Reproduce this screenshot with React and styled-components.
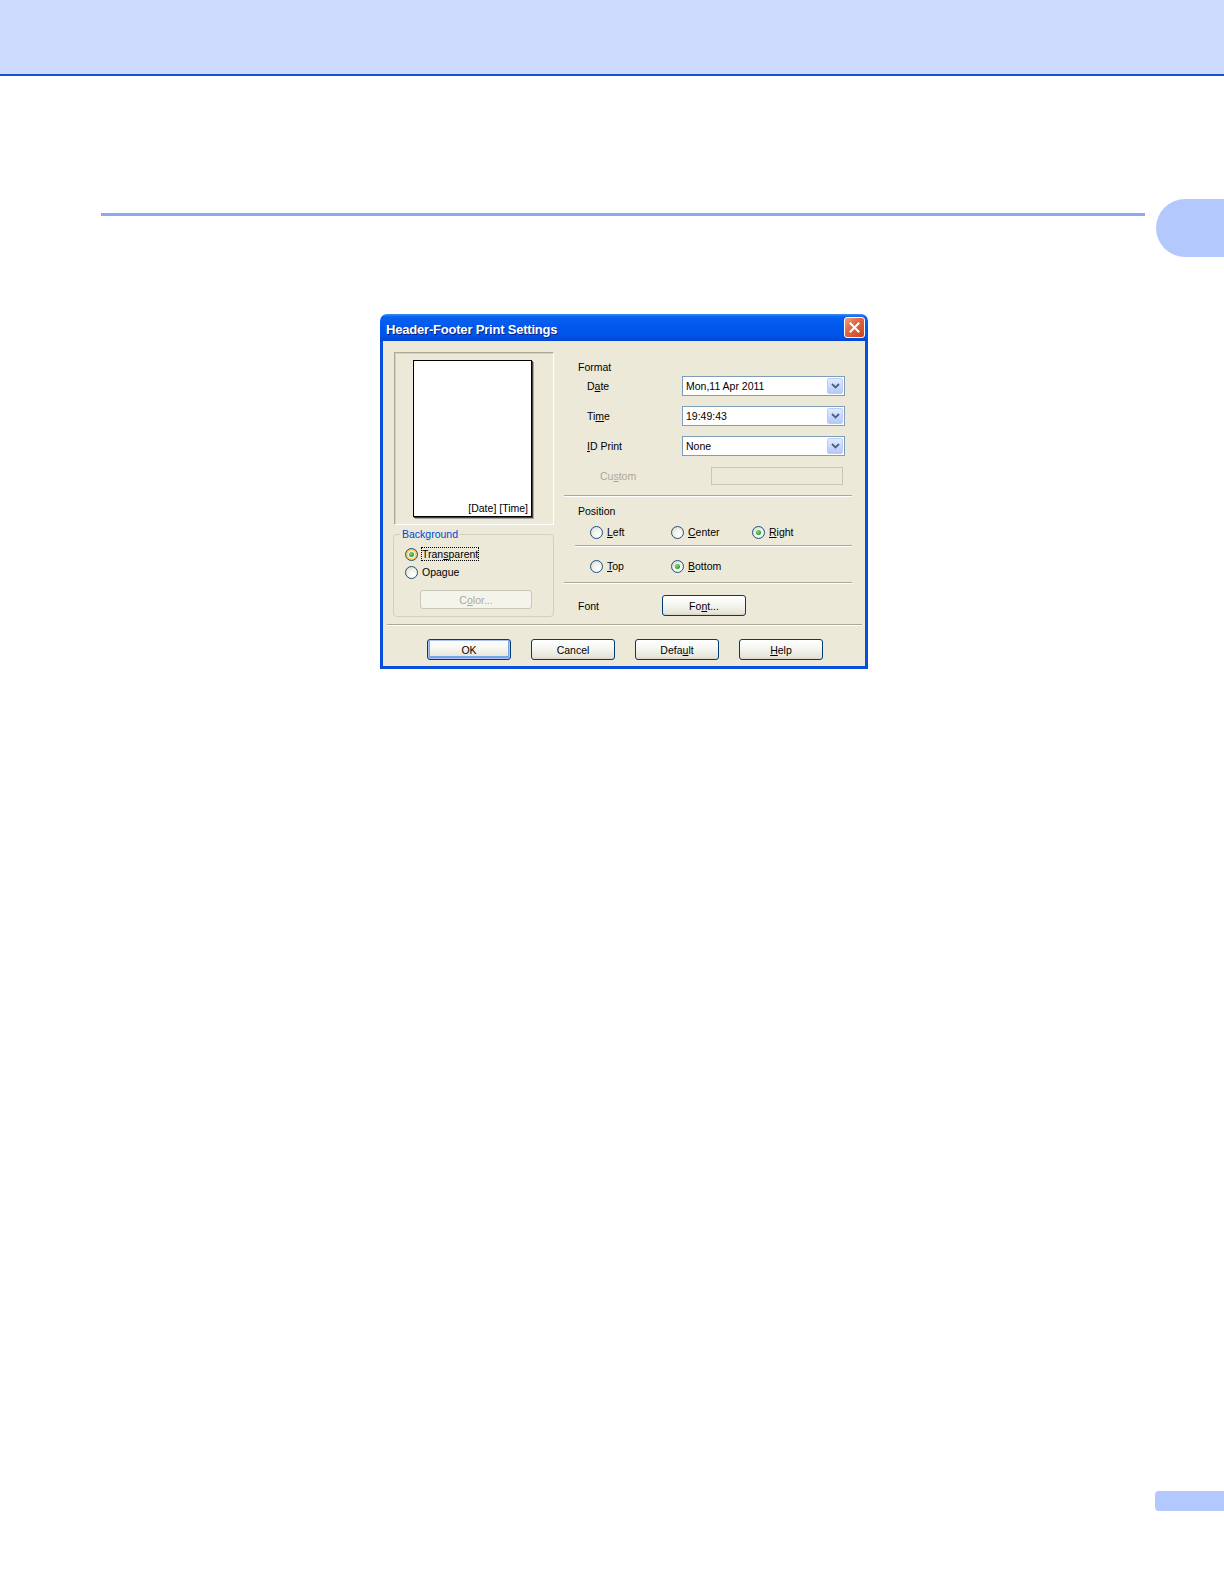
import React from 'react';
import styled, { createGlobalStyle, css } from 'styled-components';

const GlobalStyle = createGlobalStyle`
  html, body {
    margin: 0;
    padding: 0;
    background: #ffffff;
  }
  * {
    box-sizing: border-box;
  }
`;

const Page = styled.div`
  width: 1224px;
  height: 1584px;
  display: flex;
  flex-direction: column;
  background: #ffffff;
  font-family: 'Liberation Sans', Arial, sans-serif;
`;

const Header = styled.div`
  height: 76px;
  background: #cddcfe;
  border-bottom: 2px solid #1b4fd8;
`;

const RuleRow = styled.div`
  display: flex;
  align-items: flex-start;
  margin-top: 123px;
  height: 58px;
`;

const Rule = styled.div`
  margin: 14px 0 0 101px;
  width: 1044px;
  height: 3px;
  background: #8ca8f1;
`;

const SideTab = styled.div`
  margin-left: 11px;
  width: 68px;
  height: 58px;
  border-radius: 29px 0 0 29px;
  background: #b3c8fd;
`;

const DialogWrap = styled.div`
  margin-top: 57px;
  padding-left: 380px;
`;

const Footer = styled.div`
  margin-top: auto;
  padding-bottom: 73px;
  display: flex;
  justify-content: flex-end;
`;

const FooterTab = styled.div`
  width: 69px;
  height: 20px;
  border-radius: 4px 0 0 4px;
  background: #b3c8fd;
`;

/* dialog chrome */

const Dialog = styled.div`
  width: 488px;
  font-family: 'Liberation Sans', Arial, sans-serif;
  font-size: 10.5px;
  color: #000;
`;

const TitleBar = styled.div`
  height: 27px;
  display: flex;
  align-items: flex-start;
  justify-content: space-between;
  padding: 3px 3px 0 6px;
  border-radius: 7px 7px 0 0;
  background: linear-gradient(
    to bottom,
    #3d8ef8 0%,
    #0a62f0 10%,
    #0058ee 45%,
    #0054e8 80%,
    #0046d4 100%
  );
`;

const TitleText = styled.span`
  color: #ffffff;
  font-weight: bold;
  font-size: 13px;
  line-height: 15px;
  margin-top: 5px;
  letter-spacing: -0.2px;
  text-shadow: 1px 1px 0 #0a1f80;
`;

const CloseButton = styled.div`
  width: 21px;
  height: 21px;
  border: 1px solid #ffffff;
  border-radius: 3px;
  background: linear-gradient(135deg, #f0a083 0%, #e06a44 40%, #c9441f 100%);
  display: flex;
  align-items: center;
  justify-content: center;
`;

const Body = styled.div`
  background: #ece9d8;
  border: 3px solid #0850dc;
  border-top: 0;
  padding-bottom: 6px;
`;

const Top = styled.div`
  display: flex;
  align-items: flex-start;
  padding: 11px 0 0 11px;
`;

const LeftCol = styled.div`
  width: 160px;
  display: flex;
  flex-direction: column;
`;

const PreviewFrame = styled.div`
  height: 173px;
  border: 1px solid;
  border-color: #aca899 #ffffff #ffffff #aca899;
  box-shadow: inset 1px 1px 0 #d6d2c2;
  padding: 7px 0 0 18px;
`;

const Sheet = styled.div`
  width: 119px;
  height: 157px;
  background: #ffffff;
  border: 1px solid #000;
  box-shadow: 1px 1px 0 #404040, 2px 2px 0 #a8a8a8;
  display: flex;
  align-items: flex-end;
  justify-content: flex-end;
  padding: 0 3px 1px 0;
`;

const SheetText = styled.span`
  line-height: 14px;
`;

const Group = styled.fieldset`
  margin: 3px 0 0 -1px;
  padding: 0 0 7px 11px;
  width: 161px;
  border: 1px solid #d0d0bf;
  border-radius: 4px;
  min-width: 0;
`;

const Legend = styled.legend`
  margin-left: -5px;
  padding: 0 2px;
  color: #0046d5;
  line-height: 13px;
`;

const Stack = styled.div`
  display: flex;
  flex-direction: column;
  gap: ${p => p.$gap || 0}px;
  margin-top: ${p => p.$top || 0}px;
`;

const RightCol = styled.div`
  margin-left: 10px;
  width: 288px;
  display: flex;
  flex-direction: column;
`;

const Heading = styled.div`
  padding-left: 14px;
  margin-top: ${p => p.$top}px;
  line-height: 14px;
`;

const FieldRow = styled.div`
  display: grid;
  grid-template-columns: ${p => p.$label}px ${p => p.$field}px;
  align-items: center;
  padding-left: ${p => p.$pad}px;
  margin-top: ${p => p.$top}px;
`;

const Label = styled.span`
  line-height: 14px;
  color: ${p => (p.$disabled ? '#aca899' : '#000')};
`;

const U = styled.span`
  text-decoration: underline;
  text-underline-offset: 1px;
`;

const Combo = styled.div`
  height: 20px;
  border: 1px solid #7f9db9;
  background: #ffffff;
  display: flex;
  align-items: center;
  justify-content: space-between;
  padding: 1px 1px 1px 3px;
`;

const ComboValue = styled.span`
  line-height: 14px;
`;

const ComboArrow = styled.div`
  width: 16px;
  height: 16px;
  border: 1px solid #b9cdf7;
  border-radius: 2px;
  background: linear-gradient(to bottom, #e2ebfd 0%, #c6d6fb 60%, #b6c9f6 100%);
  display: flex;
  align-items: center;
  justify-content: center;
`;

const TextBox = styled.div`
  height: 18px;
  border: 1px solid #c9c7ba;
  background: #ece9d8;
`;

const Separator = styled.div`
  height: 2px;
  margin: ${p => p.$top}px ${p => p.$right || 0}px 0 ${p => p.$left || 0}px;
  border-top: 1px solid #aca899;
  border-bottom: 1px solid #ffffff;
`;

const RadioRow = styled.div`
  display: grid;
  grid-template-columns: repeat(3, 81px);
  padding-left: 26px;
  margin-top: ${p => p.$top}px;
`;

const RadioItem = styled.label`
  display: flex;
  align-items: center;
  gap: 3px;
  height: 14px;
  line-height: 14px;
`;

const RadioText = styled.span`
  padding: 0 1px;
  ${p =>
    p.$focus &&
    css`
      outline: 1px dotted #000;
      outline-offset: -1px;
    `}
`;

const Circle = styled.span`
  width: 13px;
  height: 13px;
  border-radius: 50%;
  border: 1px solid #1c5180;
  background: radial-gradient(circle at 65% 70%, #ffffff 0%, #f2f1ea 45%, #d4d2c8 100%);
  display: flex;
  align-items: center;
  justify-content: center;
  flex-shrink: 0;
  ${p =>
    p.$hot &&
    css`
      box-shadow: inset 0 0 0 1px #f8c060, inset 0 0 0 2px #fbd790;
    `}

  &::after {
    content: '';
    display: ${p => (p.$checked ? 'block' : 'none')};
    width: 5px;
    height: 5px;
    border-radius: 50%;
    background: radial-gradient(circle at 40% 35%, #7be07b 0%, #21a121 70%);
  }
`;

const Button = styled.div`
  width: ${p => p.$width || 84}px;
  height: ${p => p.$height || 21}px;
  border: 1px solid ${p => (p.$disabled ? '#c9c7ba' : '#003c74')};
  border-radius: 3px;
  background: ${p =>
    p.$disabled ? '#f5f4ea' : 'linear-gradient(to bottom, #ffffff 0%, #f4f4ef 50%, #e6e4d9 90%, #d6d0c5 100%)'};
  color: ${p => (p.$disabled ? '#aca899' : '#000')};
  display: flex;
  align-items: center;
  justify-content: center;
  line-height: 14px;
  margin-top: ${p => p.$top || 0}px;
  margin-left: ${p => p.$left || 0}px;
  ${p =>
    p.$primary &&
    css`
      box-shadow: inset 0 0 0 1px #a6c1f2, inset 0 -1px 0 2px #7ba2e7;
    `}
`;

const FontRow = styled.div`
  display: grid;
  grid-template-columns: 84px 84px;
  align-items: center;
  padding-left: 14px;
  margin-top: 11px;
`;

const ButtonBar = styled.div`
  display: flex;
  gap: 20px;
  padding-left: 44px;
  margin-top: 13px;
`;

function Chevron() {
  return (
    <svg width="9" height="6" viewBox="0 0 9 6">
      <path d="M1 1 L4.5 4.5 L8 1" fill="none" stroke="#4d6185" strokeWidth="1.8" />
    </svg>
  );
}

function CloseX() {
  return (
    <svg width="11" height="11" viewBox="0 0 11 11">
      <path d="M1.5 1.5 L9.5 9.5 M9.5 1.5 L1.5 9.5" stroke="#ffffff" strokeWidth="2" strokeLinecap="square" />
    </svg>
  );
}

function Radio({ checked, hot, focus, children }) {
  return (
    <RadioItem>
      <Circle $checked={checked} $hot={hot} />
      <RadioText $focus={focus}>{children}</RadioText>
    </RadioItem>
  );
}

function ComboBox({ value }) {
  return (
    <Combo>
      <ComboValue>{value}</ComboValue>
      <ComboArrow>
        <Chevron />
      </ComboArrow>
    </Combo>
  );
}

const formats = [
  { key: 'date', label: <>D<U>a</U>te</>, value: 'Mon,11 Apr 2011', top: 2 },
  { key: 'time', label: <>Ti<U>m</U>e</>, value: '19:49:43', top: 10 },
  { key: 'id', label: <><U>I</U>D Print</>, value: 'None', top: 10 },
];

function HeaderFooterDialog() {
  return (
    <Dialog>
      <TitleBar>
        <TitleText>Header-Footer Print Settings</TitleText>
        <CloseButton>
          <CloseX />
        </CloseButton>
      </TitleBar>
      <Body>
        <Top>
          <LeftCol>
            <PreviewFrame>
              <Sheet>
                <SheetText>[Date] [Time]</SheetText>
              </Sheet>
            </PreviewFrame>
            <Group>
              <Legend>Background</Legend>
              <Stack $gap={4} $top={6}>
                <Radio checked hot focus>
                  Tran<U>s</U>parent
                </Radio>
                <Radio>Opague</Radio>
              </Stack>
              <Button $disabled $width={112} $height={19} $top={11} $left={15}>
                C<U>o</U>lor...
              </Button>
            </Group>
          </LeftCol>

          <RightCol>
            <Heading $top={8}>Format</Heading>
            {formats.map(f => (
              <FieldRow key={f.key} $pad={23} $label={95} $field={163} $top={f.top}>
                <Label>{f.label}</Label>
                <ComboBox value={f.value} />
              </FieldRow>
            ))}
            <FieldRow $pad={36} $label={111} $field={132} $top={11}>
              <Label $disabled>
                Cu<U>s</U>tom
              </Label>
              <TextBox />
            </FieldRow>

            <Separator $top={10} />
            <Heading $top={7}>Position</Heading>
            <RadioRow $top={7}>
              <Radio>
                <U>L</U>eft
              </Radio>
              <Radio>
                <U>C</U>enter
              </Radio>
              <Radio checked>
                <U>R</U>ight
              </Radio>
            </RadioRow>
            <Separator $top={6} $left={11} />
            <RadioRow $top={12}>
              <Radio>
                <U>T</U>op
              </Radio>
              <Radio checked>
                <U>B</U>ottom
              </Radio>
            </RadioRow>
            <Separator $top={9} />
            <FontRow>
              <Label>Font</Label>
              <Button>
                Fo<U>n</U>t...
              </Button>
            </FontRow>
          </RightCol>
        </Top>

        <Separator $top={7} $left={4} $right={3} />

        <ButtonBar>
          <Button $primary>OK</Button>
          <Button>Cancel</Button>
          <Button>
            Defa<U>u</U>lt
          </Button>
          <Button>
            <U>H</U>elp
          </Button>
        </ButtonBar>
      </Body>
    </Dialog>
  );
}

export default function App() {
  return (
    <>
      <GlobalStyle />
      <Page>
        <Header />
        <RuleRow>
          <Rule />
          <SideTab />
        </RuleRow>
        <DialogWrap>
          <HeaderFooterDialog />
        </DialogWrap>
        <Footer>
          <FooterTab />
        </Footer>
      </Page>
    </>
  );
}
